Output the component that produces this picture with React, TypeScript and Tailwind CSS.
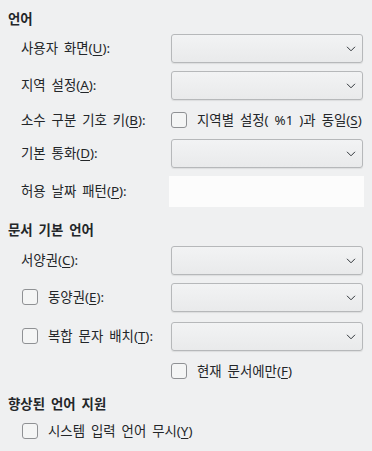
import React from 'react'

const font = { fontFamily: '"Noto Sans", "Noto Sans CJK KR", sans-serif' }

function Mn({ children }: { children: React.ReactNode }) {
  return <u className="underline underline-offset-2 decoration-1">{children}</u>
}

function Combo() {
  return (
    <div className="w-[192px] h-[29px] rounded-[3px] border border-[#b6b8ba] bg-gradient-to-b from-[#f2f3f4] to-[#e9eaeb] shadow-[0_1px_1px_rgba(0,0,0,0.08)] flex items-center justify-end pr-[6px]">
      <svg width="10" height="6" viewBox="0 0 10 6" fill="none">
        <path d="M1 0.8 L5 4.8 L9 0.8" stroke="#31363b" strokeWidth="1" />
      </svg>
    </div>
  )
}

function Check() {
  return <div className="w-[16px] h-[16px] rounded-[3px] border border-[#8f9194] bg-[#f4f5f5] shrink-0" />
}

function Header({ text, mt }: { text: string; mt: string }) {
  return (
    <div className={`${mt} h-[22px] flex items-center pl-[8px] font-bold text-[#232629]`}>{text}</div>
  )
}

function LabelRow({ label, mt, children }: { label: React.ReactNode; mt: string; children: React.ReactNode }) {
  return (
    <div className={`${mt} h-[29px] flex items-center`}>
      <div className="w-[171px] pl-[21px] shrink-0 whitespace-nowrap">{label}</div>
      {children}
    </div>
  )
}

function CheckLabelRow({ label, mt }: { label: React.ReactNode; mt: string }) {
  return (
    <div className={`${mt} h-[29px] flex items-center`}>
      <div className="w-[171px] pl-[22px] shrink-0 flex items-center gap-[10px] whitespace-nowrap">
        <Check />
        <span>{label}</span>
      </div>
      <Combo />
    </div>
  )
}

export default function App() {
  return (
    <div style={font} className="w-[372px] h-[451px] bg-[#eff0f1] text-[13.4px] [word-spacing:2.5px] text-[#232629] flex flex-col overflow-hidden">
      <Header text="언어" mt="mt-[8px]" />
      <LabelRow label={<>사용자 화면(<Mn>U</Mn>):</>} mt="mt-[4px]">
        <Combo />
      </LabelRow>
      <LabelRow label={<>지역 설정(<Mn>A</Mn>):</>} mt="mt-[8px]">
        <Combo />
      </LabelRow>
      <div className="mt-[8px] h-[24px] flex items-center whitespace-nowrap">
        <div className="w-[171px] pl-[21px] shrink-0">소수 구분 기호 키(<Mn>B</Mn>):</div>
        <div className="flex items-center gap-[10px]">
          <Check />
          <span>지역별 설정( %1 )과 동일(<Mn>S</Mn>)</span>
        </div>
      </div>
      <LabelRow label={<>기본 통화(<Mn>D</Mn>):</>} mt="mt-[7px]">
        <Combo />
      </LabelRow>
      <div className="mt-[8px] h-[31px] flex items-center">
        <div className="w-[169px] pl-[21px] shrink-0 whitespace-nowrap">허용 날짜 패턴(<Mn>P</Mn>):</div>
        <div className="w-[195px] h-[31px] bg-[#fcfcfc]" />
      </div>

      <Header text="문서 기본 언어" mt="mt-[12px]" />
      <LabelRow label={<>서양권(<Mn>C</Mn>):</>} mt="mt-[5px]">
        <Combo />
      </LabelRow>
      <CheckLabelRow label={<>동양권(<Mn>E</Mn>):</>} mt="mt-[8px]" />
      <CheckLabelRow label={<>복합 문자 배치(<Mn>T</Mn>):</>} mt="mt-[10px]" />
      <div className="mt-[8px] h-[24px] flex items-center pl-[171px] gap-[10px]">
        <Check />
        <span>현재 문서에만(<Mn>F</Mn>)</span>
      </div>

      <Header text="향상된 언어 지원" mt="mt-[10px]" />
      <div className="mt-[4px] h-[24px] flex items-center pl-[22px] gap-[10px]">
        <Check />
        <span>시스템 입력 언어 무시(<Mn>Y</Mn>)</span>
      </div>
    </div>
  )
}
